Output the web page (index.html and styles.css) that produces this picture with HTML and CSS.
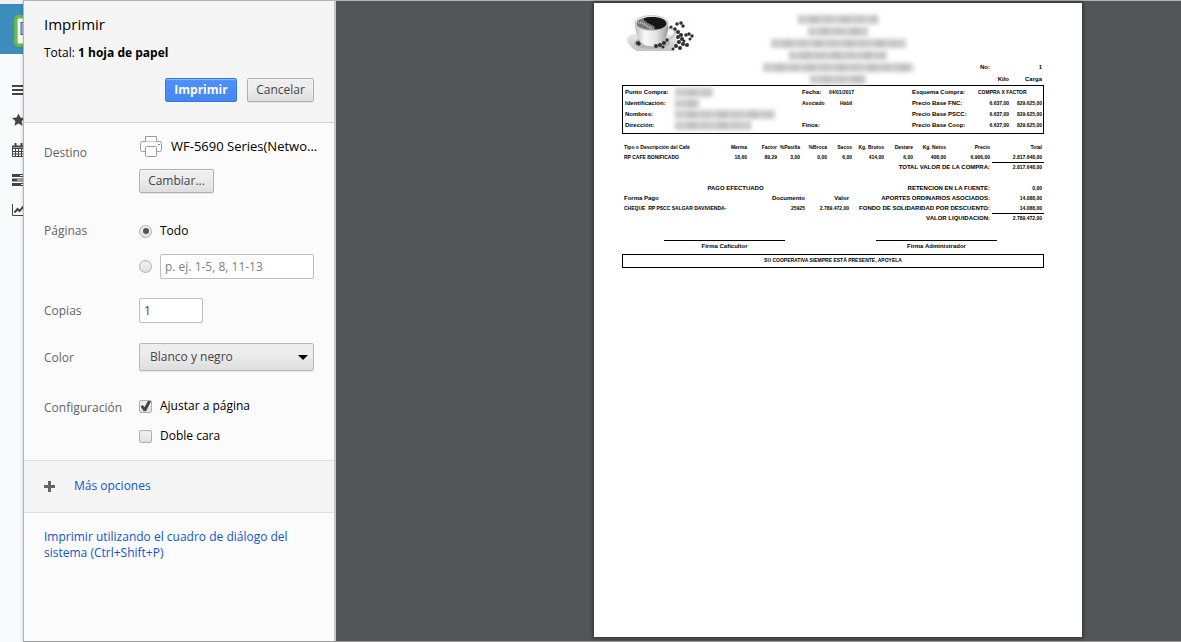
FILE: index.html
```html
<!DOCTYPE html>
<html lang="es">
<head>
<meta charset="utf-8">
<title>Imprimir</title>
<link rel="stylesheet" href="styles.css">
</head>
<body>
<nav class="strip" aria-label="Menú">
  <div class="strip-top">
    <svg class="strip-logo" width="10" height="32" viewBox="0 0 10 32"><rect x="1.800" y="1.800" width="30" height="28.400" rx="3" fill="#fff" stroke="#64bd4b" stroke-width="3.600"/><rect x="7" y="7.500" width="16" height="12" fill="#a9b9c9" stroke="#3f6da5"/></svg>
  </div>
  <div class="strip-menu">
    <a href="#" aria-label="Menú"><svg width="12" height="14" viewBox="0 0 12 14" fill="#444"><path d="M0 2h12v2H0zM0 6h12v2H0zM0 10h12v2H0z"/></svg></a>
    <a href="#" aria-label="Favoritos"><svg width="12" height="14" viewBox="0 0 12 14" fill="#444"><path d="M6.500 .5l1.900 4.100 4.600.5-3.400 3.100.9 4.600-4-2.300-4 2.300.9-4.600L0 5.100l4.600-.5z"/></svg></a>
    <a href="#" aria-label="Calendario"><svg width="12" height="14" viewBox="0 0 12 14" fill="none" stroke="#444"><path d="M.5 3v10.500H12M.5 5.500H12M.5 8.500H12M.5 11H12M3.500 5v8M6.500 5v8M9.500 5v8"/><path d="M0 3.500h12" stroke-width="2"/><path d="M3.500 0v4M9.500 0v4" stroke-width="2"/></svg></a>
    <a href="#" aria-label="Tareas"><svg width="12" height="14" viewBox="0 0 12 14" fill="#444"><path d="M0 1h12v3H0zM0 5.500h12v3H0zM0 10h12v3H0z"/><path d="M8 2h4v1H8zM5 6.500h7v1H5zM9 11h3v1H9z" fill="#f9fafc"/></svg></a>
    <a href="#" aria-label="Gráficos"><svg width="12" height="14" viewBox="0 0 12 14" fill="none" stroke="#444"><path d="M.5 1v11.500H12"/><path d="M2.500 9.500l3-3.500 2 2L12 3" stroke-width="2"/></svg></a>
  </div>
</nav>
<main class="dialog">
  <form class="panel" onsubmit="return false">
    <header class="head">
      <h1>Imprimir</h1>
      <p>Total: <b>1 hoja de papel</b></p>
      <div class="actions">
        <button class="btn primary" type="submit">Imprimir</button>
        <button class="btn cancel" type="button">Cancelar</button>
      </div>
    </header>
    <section class="settings">
      <div class="row dest">
        <span class="label">Destino</span>
        <div class="ctl">
          <div class="printer">
            <svg width="22" height="21" viewBox="0 0 22 21" fill="#fff" stroke="#9a9a9a"><path d="M5.500 6V.5h11V6"/><path d="M2.500 5.500h17a2 2 0 0 1 2 2v6a2 2 0 0 1-2 2h-17a2 2 0 0 1-2-2v-6a2 2 0 0 1 2-2z"/><path d="M5.500 5.500h11" stroke="#ccc"/><rect x="5.500" y="10.500" width="11" height="10" rx="1"/><path d="M18 8h2v1h-2z" fill="#888" stroke="none"/></svg>
            <span>WF-5690 Series(Netwo...</span>
          </div>
          <button class="btn change" type="button">Cambiar...</button>
        </div>
      </div>
      <div class="row pages">
        <span class="label">Páginas</span>
        <div class="ctl">
          <label class="opt"><input type="radio" name="pages" checked>Todo</label>
          <div class="opt range"><input type="radio" name="pages" aria-label="Intervalo de páginas"><input class="text" type="text" placeholder="p. ej. 1-5, 8, 11-13" aria-label="Páginas"></div>
        </div>
      </div>
      <div class="row copies">
        <label class="label" for="copies">Copias</label>
        <div class="ctl"><input class="text short" id="copies" type="text" value="1"></div>
      </div>
      <div class="row color">
        <label class="label" for="color">Color</label>
        <div class="ctl pick"><select id="color"><option>Blanco y negro</option><option>Color</option></select></div>
      </div>
      <div class="row config">
        <span class="label">Configuración</span>
        <div class="ctl">
          <label class="opt"><input type="checkbox" checked>Ajustar a página</label>
          <label class="opt"><input type="checkbox">Doble cara</label>
        </div>
      </div>
    </section>
    <div class="more">
      <svg width="11" height="11" viewBox="0 0 11 11" fill="#666"><path d="M4 0h3v4h4v3H7v4H4V7H0V4h4z"/></svg>
      <a href="#">Más opciones</a>
    </div>
    <div class="system"><a href="#">Imprimir utilizando el cuadro de diálogo del sistema (Ctrl+Shift+P)</a></div>
  </form>
  <section class="preview" aria-label="Vista previa">
    <article class="paper">
      <header class="rc-head">
        <svg class="cup" width="72" height="36" viewBox="0 0 72 36">
          <defs>
            <linearGradient id="cg" x1="0" x2="1"><stop offset="0" stop-color="#bbb"/><stop offset=".3" stop-color="#fafafa"/><stop offset=".65" stop-color="#e2e2e2"/><stop offset="1" stop-color="#999"/></linearGradient>
            <linearGradient id="sg" x1="0" x2="0" y1="0" y2="1"><stop offset="0" stop-color="#eee"/><stop offset="1" stop-color="#c4c4c4"/></linearGradient>
          </defs>
          <rect width="72" height="36" fill="#fdfdfd"/>
          <path d="M4 24c0-4 12-7 25-7s26 4 26 9c0 4-3 8-7 10H14C8 33 4 28 4 24z" fill="url(#sg)"/>
          <ellipse cx="29" cy="28" rx="18" ry="6" fill="#b4b4b4"/>
          <path d="M43 14c6-2 10 0 9 4-1 5-7 7-12 7" fill="none" stroke="#ccc" stroke-width="2.500"/>
          <path d="M12 8c0 9 3 17 8 21 4 3 14 3 18 0 5-4 8-12 7-21z" fill="url(#cg)"/>
          <ellipse cx="28.500" cy="8" rx="16.500" ry="7.500" fill="#e9e9e9" stroke="#aaa" stroke-width=".6"/>
          <ellipse cx="28.500" cy="8.500" rx="15" ry="6.300" fill="#777"/>
          <path d="M20 3.500c10-3 23-1 23.500 5 0 3-6 6-12 6 3-5-9-5-11-11z" fill="#161616"/>
          <path d="M15 8c5-2 8 4 14 5" fill="none" stroke="#ccc" stroke-width="2" stroke-dasharray="1 1"/>
          <g fill="#303030"><path d="M13 27l3-1 2 3-2 2-3-2z"/><circle cx="33" cy="31" r="2"/><circle cx="37" cy="30" r="2"/><circle cx="41" cy="28" r="2"/><circle cx="44" cy="25" r="1.700"/><circle cx="40" cy="32" r="1.500"/><circle cx="48" cy="12" r="1.600"/><circle cx="52" cy="14" r="1.800"/><circle cx="54" cy="9" r="1.800"/><circle cx="58" cy="8" r="1.800"/><circle cx="60" cy="11" r="1.700"/><circle cx="55" cy="17" r="2"/><circle cx="58" cy="20" r="2"/><circle cx="55" cy="22" r="2"/><circle cx="59" cy="24" r="2"/><circle cx="56" cy="27" r="2"/><circle cx="60" cy="29" r="2"/><circle cx="53" cy="31" r="2"/><circle cx="57" cy="33" r="2"/><circle cx="64" cy="30" r="2"/><circle cx="61" cy="26" r="1.500"/><circle cx="63" cy="20" r="1.800"/><circle cx="66" cy="19" r="1.700"/><circle cx="69" cy="21" r="1.700"/><circle cx="67" cy="24" r="1.500"/><circle cx="50" cy="34" r="1.500"/></g>
        </svg>
        <div class="org">
          <i class="smudge w80"></i><i class="smudge w60"></i><i class="smudge w135"></i><i class="smudge w98"></i><i class="smudge w150"></i><i class="smudge w56"></i>
        </div>
        <div class="num">
          <span>No:</span><span></span><span>1</span>
          <span></span><span>Kilo</span><span>Carga</span>
        </div>
      </header>
      <div class="info">
        <b>Punto Compra:</b><span><i class="smudge w38"></i></span><b>Fecha:</b><span>04/01/2017</span><b>Esquema Compra:</b><span class="wide">COMPRA X FACTOR</span>
        <b>Identificación:</b><span><i class="smudge w24"></i></span><span>Asociado</span><span class="ind">Hábil</span><b>Precio Base FNC:</b><span class="r">6.637,00</span><span class="r">829.625,00</span>
        <b>Nombres:</b><span><i class="smudge w100"></i></span><span></span><span></span><b>Precio Base PSCC:</b><span class="r">6.637,00</span><span class="r">829.625,00</span>
        <b>Dirección:</b><span><i class="smudge w76"></i></span><b>Finca:</b><span></span><b>Precio Base Coop:</b><span class="r">6.637,00</span><span class="r">829.625,00</span>
      </div>
      <table class="items">
        <colgroup><col class="c1"><col class="c2"><col class="c3"><col class="c4"><col class="c5"><col class="c6"><col class="c7"><col class="c8"><col class="c9"><col class="c10"><col class="c11"></colgroup>
        <thead><tr><th>Tipo o Descripción del Café</th><th>Merma</th><th>Factor</th><th>%Pasilla</th><th>%Broca</th><th>Sacos</th><th>Kg. Brutos</th><th>Destare</th><th>Kg. Netos</th><th>Precio</th><th>Total</th></tr></thead>
        <tbody>
          <tr><td>RP CAFE BONIFICADO</td><td>18,60</td><td>89,29</td><td>3,00</td><td>0,00</td><td>6,00</td><td>414,00</td><td>6,00</td><td>408,00</td><td>6.906,00</td><td>2.817.648,00</td></tr>
          <tr><th colspan="10" class="big">TOTAL VALOR DE LA COMPRA:</th><td class="sum">2.817.648,00</td></tr>
        </tbody>
      </table>
      <div class="totals">
        <table class="pay">
          <caption>PAGO EFECTUADO</caption>
          <tr><th>Forma Pago</th><th>Documento</th><th>Valor</th></tr>
          <tr><td>CHEQUE&nbsp; RP PSCC SALGAR DAVIVIENDA-</td><td>25925</td><td>2.789.472,00</td></tr>
        </table>
        <table class="liq">
          <tr><th>RETENCION EN LA FUENTE:</th><td>0,00</td></tr>
          <tr><th>APORTES ORDINARIOS ASOCIADOS:</th><td>14.088,00</td></tr>
          <tr><th>FONDO DE SOLIDARIDAD POR DESCUENTO:</th><td>14.088,00</td></tr>
          <tr><th>VALOR LIQUIDACION:</th><td class="sum">2.789.472,00</td></tr>
        </table>
      </div>
      <div class="signs"><span>Firma Caficultor</span><span>Firma Administrador</span></div>
      <p class="motto">SU COOPERATIVA SIEMPRE ESTÁ PRESENTE, APOYELA</p>
    </article>
  </section>
</main>
</body>
</html>
```

FILE: styles.css
```css
* { box-sizing: border-box; }
body {
  margin: 0;
  display: flex;
  min-height: 100vh;
  background: #f9fafc;
  font: 12px/16px "Open Sans", "Noto Sans", sans-serif;
  color: #000;
}
h1, p { margin: 0; font-weight: normal; }
a { color: #15c; text-decoration: none; }

/* Application behind the dialog */
.strip { width: 23px; overflow: hidden; }
.strip-top { height: 54px; border-top: 4px solid #f0f0f0; background: #3c8dbc; padding: 11px 0 0 14px; }
.strip-logo { display: block; }
.strip-menu { padding: 29px 0 0 12px; display: flex; flex-direction: column; gap: 16px; }
.strip-menu a, .strip-menu svg { display: block; height: 14px; }

/* Print dialog */
.dialog {
  flex: 1;
  display: flex;
  border: 1px solid #b5b5b5;
  border-right: 0;
  border-bottom-color: #999;
  box-shadow: 0 0 3px rgba(0, 0, 0, .25);
}
.panel { width: 312px; flex: none; background: #fbfbfb; border-right: 2px solid #c8c8c8; }
.head { background: #f5f5f5; border-bottom: 1px solid #d2d2d2; padding: 11px 20px 20px; }
.head h1 { font-size: 15px; line-height: 24px; margin-bottom: 9px; }
.actions { display: flex; justify-content: flex-end; gap: 10px; margin-top: 17px; }
.btn {
  height: 24px;
  padding: 0;
  border: 1px solid #b0b0b0;
  border-radius: 2px;
  background: linear-gradient(#ededed 38%, #dedede);
  box-shadow: 0 1px 0 rgba(0, 0, 0, .08), inset 0 1px 2px rgba(255, 255, 255, .75);
  color: #444;
  font: inherit;
}
.cancel { width: 67px; }
.change { width: 75px; }
.primary {
  width: 72px;
  border-color: #3079ed;
  background: linear-gradient(#4d90fe, #4787ed);
  box-shadow: inset 0 1px 1px rgba(255, 255, 255, .4);
  color: #fff;
  font-weight: bold;
}
.settings { padding: 12px 20px 16px; }
.row { display: grid; grid-template-columns: 95px 1fr; }
.label { color: #646464; padding-top: 9px; }
.dest .label { padding-top: 10px; }
.printer { display: flex; align-items: center; gap: 9px; height: 22px; margin-bottom: 12px; white-space: nowrap; }
.printer svg { flex: none; margin-left: 1px; }
.printer span { font-size: 13px; }
.pages { margin-top: 30px; }
.pages .label { padding-top: 0; }
.opt { display: flex; align-items: center; gap: 8px; height: 16px; }
.range { height: 25px; margin-top: 15px; }
.text {
  width: 100%;
  min-width: 0;
  height: 25px;
  margin: 0;
  padding: 0 4px;
  border: 1px solid #bfbfbf;
  border-radius: 2px;
  background: #fff;
  color: #444;
  font: inherit;
}
.text::placeholder { color: #808080; }
.short { width: 64px; display: block; }
.copies { margin-top: 19px; }
.copies .label { padding-top: 5px; }
.color { margin-top: 20px; }
.color .label { padding-top: 7px; }
.pick { display: grid; align-items: center; }
.pick::after {
  content: "";
  grid-area: 1 / 1;
  justify-self: end;
  margin-right: 6px;
  border: 5px solid transparent;
  border-top-color: #000;
  border-bottom: 0;
  pointer-events: none;
}
select {
  grid-area: 1 / 1;
  appearance: none;
  width: 100%;
  height: 28px;
  padding: 0 20px 0 10px;
  border: 1px solid #b8b8b8;
  border-radius: 2px;
  background: linear-gradient(#ededed 38%, #dedede);
  box-shadow: 0 1px 0 rgba(0, 0, 0, .08);
  color: #444;
  font: inherit;
}
input[type="radio"], input[type="checkbox"] {
  appearance: none;
  flex: none;
  display: grid;
  place-items: center;
  width: 13px;
  height: 13px;
  margin: 0;
  border: 1px solid #b0b0b0;
  border-radius: 2px;
  background: linear-gradient(#ededed 38%, #dedede);
}
input[type="radio"] { border-radius: 50%; }
input[type="radio"]:checked::before { content: ""; width: 6px; height: 6px; border-radius: 50%; background: #555; }
input[type="checkbox"]:checked::before {
  content: "";
  width: 11px;
  height: 11px;
  background: #444;
  clip-path: polygon(5% 55%, 25% 40%, 40% 62%, 75% 0, 100% 8%, 55% 95%, 35% 98%);
}
.config { margin-top: 27px; }
.config .label { padding-top: 2px; }
.config .opt + .opt { margin-top: 14px; }
.more {
  display: flex;
  align-items: center;
  gap: 19px;
  height: 53px;
  padding: 0 20px;
  background: #f5f5f5;
  border: solid #dedede;
  border-width: 1px 0;
}
.more a { margin-bottom: 2px; }
.system { padding: 16px 20px; }

/* Page preview */
.preview { flex: 1; display: flex; padding: 2px 99px 4px 258px; background: #525659; }
.paper {
  flex: 1;
  min-width: 0;
  padding: 10px 38px 10px 28px;
  background: #fff;
  box-shadow: 0 0 4px 1px rgba(0, 0, 0, .45);
  font: bold 5px/10px "Liberation Sans", Arial, sans-serif;
}
.smudge {
  display: block;
  height: 9px;
  background: repeating-linear-gradient(90deg, #c4c4c4 0, #d0d0d0 8px, #bcbcbc 17px, #cecece 23px, #c4c4c4 31px);
  filter: blur(2px);
}
.w24 { width: 24px; } .w38 { width: 38px; } .w56 { width: 56px; } .w60 { width: 60px; }
.w76 { width: 76px; } .w80 { width: 80px; } .w98 { width: 98px; } .w100 { width: 100px; }
.w135 { width: 135px; } .w150 { width: 150px; }
.rc-head { display: grid; grid-template-columns: 141fr 150px 131fr; height: 72px; }
.cup { margin: 2px 0 0 1px; }
.org { display: flex; flex-direction: column; align-items: center; gap: 3px; padding-top: 2px; }
.num {
  align-self: end;
  display: grid;
  grid-template-columns: 1fr 31px 33px;
  row-gap: 2px;
  padding: 0 2px 1px 0;
  font-size: 6px;
  text-align: right;
}
.num span:first-child { margin-right: -12px; }
.info {
  display: grid;
  grid-template-columns: 50fr 127fr 27fr 83fr 66fr 31fr 33fr;
  grid-auto-rows: 11px;
  padding: 1px 1px 2px 2px;
  border: 1px solid #000;
  white-space: nowrap;
}
.info b { font-size: 6px; }
.info .smudge { margin-top: 1px; }
.wide { grid-column: span 2; }
.r { text-align: right; }
.ind { padding-left: 11px; }
table { table-layout: fixed; border-collapse: collapse; }
th, td { padding: 0; height: 10px; line-height: 10px; text-align: right; white-space: nowrap; }
th:first-child, td:first-child { text-align: left; }
.items { width: 100%; margin-top: 8px; }
.items td:first-child:not(.sum), .items thead th:first-child { padding-left: 2px; }
.items th:last-child, .items td:last-child, .liq td { padding-right: 2px; }
.c1 { width: 98px; } .c2 { width: 27px; } .c3 { width: 30px; } .c4 { width: 23px; }
.c5 { width: 27px; } .c6 { width: 25px; } .c7 { width: 32px; } .c8 { width: 29px; }
.c9 { width: 33px; } .c10 { width: 44px; } .c11 { width: 54px; }
.items .big, .liq th { font-size: 6px; text-align: right; }
.sum { background: linear-gradient(#000, #000) right top / 52px 1px no-repeat; }
.totals { display: grid; grid-template-columns: 227fr 195fr; align-items: start; margin-top: 11px; }
.pay { width: 100%; }
.pay caption { font-size: 6px; height: 10px; }
.pay th { font-size: 6px; }
.pay tr > :first-child { width: 138px; padding-left: 2px; }
.pay tr > :nth-child(2) { width: 45px; }
.liq { width: 100%; }
.liq th { width: 141px; }
.signs { display: grid; grid-template-columns: 121px 121px; gap: 91px; margin: 17px 0 0 42px; font-size: 6px; text-align: center; }
.signs span { border-top: 1px solid #000; }
.motto { margin-top: 3px; border: 1px solid #000; height: 14px; text-align: center; font-weight: bold; }
```
